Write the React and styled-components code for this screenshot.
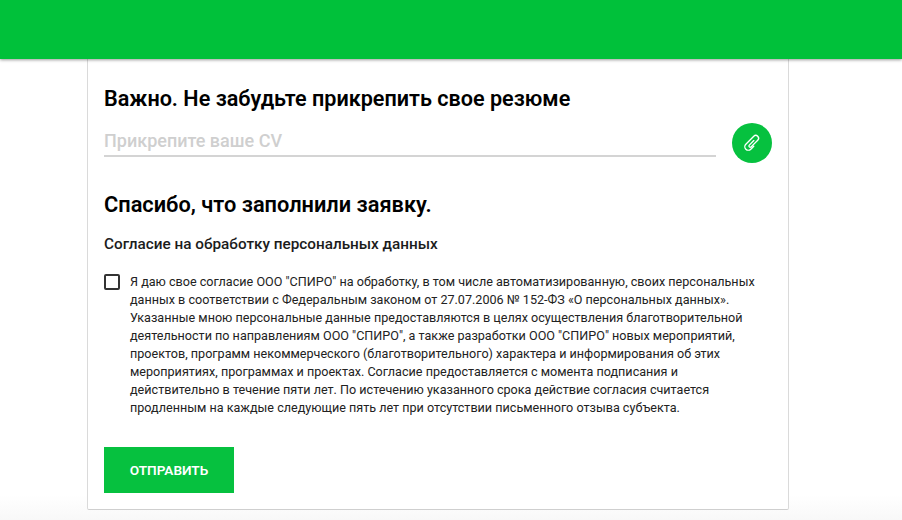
import React from "react";
import styled, { createGlobalStyle } from "styled-components";

const GlobalStyle = createGlobalStyle`
  html, body {
    margin: 0;
    padding: 0;
    height: 520px;
    overflow: hidden;
    background: #fff;
    font-family: "Roboto", "Liberation Sans", sans-serif;
  }
`;

const consentLines = [
  'Я даю свое согласие ООО "СПИРО" на обработку, в том числе автоматизированную, своих персональных',
  "данных в соответствии с Федеральным законом от 27.07.2006 № 152-ФЗ «О персональных данных».",
  "Указанные мною персональные данные предоставляются в целях осуществления благотворительной",
  'деятельности по направлениям ООО "СПИРО", а также разработки ООО "СПИРО" новых мероприятий,',
  "проектов, программ некоммерческого (благотворительного) характера и информирования об этих",
  "мероприятиях, программах и проектах. Согласие предоставляется с момента подписания и",
  "действительно в течение пяти лет. По истечению указанного срока действие согласия считается",
  "продленным на каждые следующие пять лет при отсутствии письменного отзыва субъекта.",
];

const App = () => {
  return (
    <Page>
      <GlobalStyle />
      <Header />
      <Card>
        <ResumeTitle>Важно. Не забудьте прикрепить свое резюме</ResumeTitle>
        <AttachRow>
          <AttachInput>Прикрепите ваше CV</AttachInput>
          <AttachButton aria-label="Прикрепить">
            <svg width="24" height="24" viewBox="-12 -12 24 24" fill="none">
              <path
                transform="rotate(45)"
                d="M3.5 1V5.2a3.5 3.5 0 0 1-7 0V-6a2.8 2.8 0 0 1 5.6 0V3.4a1.25 1.25 0 0 1-2.5 0V-3"
                stroke="#fff"
                strokeWidth="1.35"
                strokeLinecap="round"
              />
            </svg>
          </AttachButton>
        </AttachRow>
        <ThanksTitle>Спасибо, что заполнили заявку.</ThanksTitle>
        <ConsentTitle>Согласие на обработку персональных данных</ConsentTitle>
        <ConsentRow>
          <Checkbox />
          <ConsentText>
            {consentLines.map((line) => (
              <span key={line}>{line}</span>
            ))}
          </ConsentText>
        </ConsentRow>
        <SubmitButton>ОТПРАВИТЬ</SubmitButton>
      </Card>
    </Page>
  );
};

export default App;

const Page = styled.div`
  height: 520px;
  background: linear-gradient(#fff 495px, #f8f8f8);
  display: flex;
  flex-direction: column;
  align-items: center;
  overflow: hidden;
`;

const Header = styled.header`
  flex: none;
  align-self: stretch;
  height: 59px;
  background: #00c13a;
  box-shadow: 0 1px 3px rgba(0, 0, 0, 0.4);
  position: relative;
  z-index: 1;
`;

const Card = styled.main`
  box-sizing: border-box;
  flex: none;
  width: 702px;
  height: 451px;
  margin-right: 26px;
  padding: 26px 16px 0 16px;
  background: #fff;
  border: 1px solid #dadada;
  border-top: none;
  border-bottom-color: #cfcfcf;
  border-radius: 0 0 2px 2px;
`;

const ResumeTitle = styled.h2`
  margin: 0;
  font-size: 21.6px;
  line-height: 28px;
  font-weight: 600;
  color: #000;
`;

const AttachRow = styled.div`
  display: flex;
  align-items: flex-end;
  justify-content: space-between;
  margin-top: 10px;
  height: 40px;
`;

const AttachInput = styled.div`
  box-sizing: border-box;
  width: 612px;
  height: 28px;
  margin-bottom: 6px;
  border-bottom: 2px solid #d4d4d4;
  color: #cfcfcf;
  font-size: 18px;
  line-height: 24px;
  font-weight: 500;
`;

const AttachButton = styled.button`
  width: 40px;
  height: 40px;
  padding: 0;
  border: none;
  border-radius: 50%;
  background: #06c13f;
  display: flex;
  align-items: center;
  justify-content: center;
`;

const ThanksTitle = styled.h2`
  margin: 28px 0 0;
  font-size: 21.8px;
  line-height: 28px;
  font-weight: 600;
  color: #000;
`;

const ConsentTitle = styled.h3`
  margin: 15px 0 0;
  font-size: 15.3px;
  line-height: 20px;
  font-weight: 500;
  color: #1c1c1c;
`;

const ConsentRow = styled.div`
  display: flex;
  gap: 10px;
  margin-top: 19px;
`;

const Checkbox = styled.span`
  box-sizing: border-box;
  flex: none;
  width: 16px;
  height: 16px;
  margin-top: 1px;
  border: 2px solid #333;
  border-radius: 2px;
`;

const ConsentText = styled.p`
  margin: 0;
  display: flex;
  flex-direction: column;
  font-size: 12.6px;
  line-height: 18px;
  color: #222;
  white-space: nowrap;
`;

const SubmitButton = styled.button`
  display: block;
  width: 130px;
  height: 46px;
  margin-top: 30px;
  padding: 0;
  border: none;
  background: #06c13f;
  color: #fff;
  font-family: inherit;
  font-size: 13.6px;
  font-weight: 600;
`;
